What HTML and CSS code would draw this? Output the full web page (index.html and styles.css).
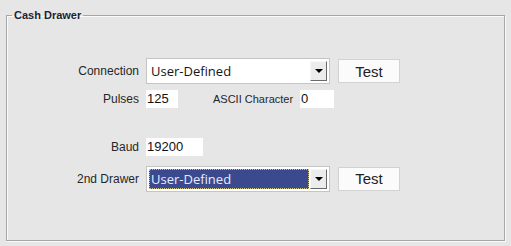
FILE: index.html
```html
<!DOCTYPE html>
<html lang="en">
<head>
    <meta charset="UTF-8">
    <title>Cash Drawer</title>
    <link rel="stylesheet" href="styles.css">
</head>
<body>
    <div class="panel">
        <fieldset class="group">
            <legend>Cash Drawer</legend>

            <div class="row row-connection">
                <label class="lbl">Connection</label>
                <div class="combo">
                    <span class="combo-text">User-Defined</span>
                    <span class="combo-btn"><span class="arrow"></span></span>
                </div>
                <button class="btn">Test</button>
            </div>

            <div class="row row-pulses">
                <label class="lbl">Pulses</label>
                <div class="field w-pulses">125</div>
                <label class="lbl-inline">ASCII Character</label>
                <div class="field w-ascii">0</div>
            </div>

            <div class="row row-baud">
                <label class="lbl">Baud</label>
                <div class="field w-baud">19200</div>
            </div>

            <div class="row row-drawer">
                <label class="lbl">2nd Drawer</label>
                <div class="combo combo-focus">
                    <span class="combo-text">User-Defined</span>
                    <span class="combo-btn"><span class="arrow"></span></span>
                </div>
                <button class="btn">Test</button>
            </div>
        </fieldset>
    </div>
</body>
</html>
```

FILE: styles.css
```css
* {
    box-sizing: border-box;
}

body {
    margin: 0;
    background: #e6e6e6;
    font-family: "Liberation Sans", Arial, sans-serif;
    color: #262626;
}

.panel {
    padding: 9px 6px 4px 6px;
}

.group {
    margin: 0;
    height: 232px;
    padding: 0;
    border: 1px solid #a6a6a6;
    box-shadow: inset 1px 1px 0 #fafafa, 1px 1px 0 #fafafa;
}

legend {
    margin-left: 5px;
    padding: 0 2px;
    font-size: 11px;
    font-weight: bold;
    color: #1a2535;
    line-height: 13px;
}

.row {
    display: flex;
    align-items: center;
}

.row-connection {
    margin-top: 36px;
    height: 26px;
}

.row-pulses {
    margin-top: 6px;
    height: 18px;
}

.row-baud {
    margin-top: 30px;
    height: 18px;
}

.row-drawer {
    margin-top: 10px;
    height: 25px;
}

.lbl {
    width: 139px;
    text-align: right;
    padding-right: 7px;
    font-size: 12px;
}

.lbl-inline {
    margin-left: 35px;
    margin-right: 7px;
    font-size: 11px;
}

.field {
    height: 18px;
    background: #fff;
    font-size: 13px;
    line-height: 18px;
    padding-left: 1px;
    color: #111;
}

.w-pulses { width: 32px; }
.w-ascii { width: 34px; }
.w-baud { width: 57px; }

.combo {
    display: flex;
    width: 184px;
    height: 26px;
    background: #fff;
    border: 1px solid #c4c4c4;
    padding: 2px;
}

.combo-text {
    flex: 1;
    font-family: "Open Sans", "Liberation Sans", sans-serif;
    font-size: 13px;
    line-height: 20px;
    padding-left: 2px;
    color: #151515;
}

.combo-focus .combo-text {
    background: #3b4a8f;
    color: #e8ecff;
    outline: 1px dotted #c9c08a;
    outline-offset: -1px;
}

.combo-btn {
    width: 17px;
    margin-left: 1px;
    background: #ececec;
    border-top: 1px solid #f8f8f8;
    border-left: 1px solid #f8f8f8;
    border-right: 1px solid #6a6a6a;
    border-bottom: 1px solid #6a6a6a;
    display: flex;
    align-items: center;
    justify-content: center;
}

.arrow {
    width: 0;
    height: 0;
    border-left: 4px solid transparent;
    border-right: 4px solid transparent;
    border-top: 4px solid #000;
}

.btn {
    margin-left: 8px;
    width: 62px;
    height: 24px;
    background: #fbfbfb;
    border: 1px solid #d2d2d2;
    font-family: "Liberation Sans", Arial, sans-serif;
    font-size: 15px;
    color: #222;
    padding: 0;
}
```
